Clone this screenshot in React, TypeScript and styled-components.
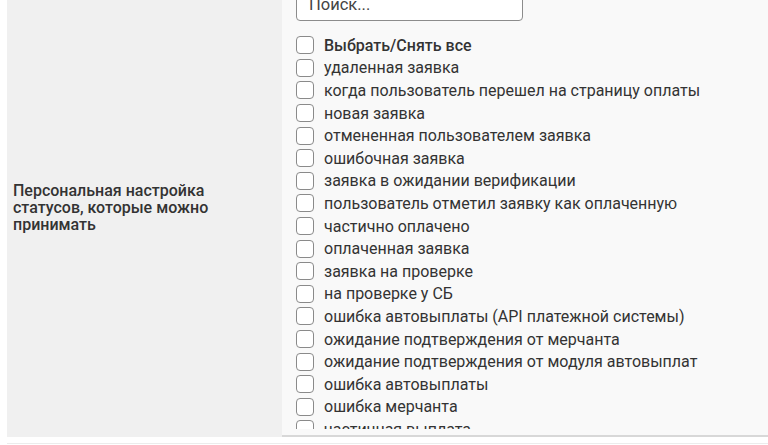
import React from "react";
import styled, { createGlobalStyle } from "styled-components";

const GlobalStyle = createGlobalStyle`
  html, body {
    margin: 0;
    padding: 0;
    background: #ffffff;
    overflow: hidden;
  }
  body {
    font-family: Roboto, "Liberation Sans", Arial, sans-serif;
    color: #333333;
  }
`;

const Page = styled.div`
  padding-left: 7px;
  margin-top: -23px;
`;

const SettingsTable = styled.div`
  display: grid;
  grid-template-columns: 275px 1fr;
  row-gap: 6px;
`;

const LabelCell = styled.div`
  background: #f0f0f0;
  display: flex;
  align-items: center;
  padding: 0 6px;
`;

const Label = styled.div`
  font-size: 16px;
  font-weight: 500;
  line-height: 17px;
  color: #333333;
  max-width: 240px;
`;

const ValueCell = styled.div`
  background: #f9f9f9;
  padding: 10px 14px 6px;
  border-bottom: 2px solid #d8d8d8;
`;

const SearchInput = styled.input`
  display: block;
  box-sizing: border-box;
  width: 227px;
  height: 34px;
  padding: 0 12px;
  margin-bottom: 13px;
  border: 1px solid #8c8c8c;
  border-radius: 4px;
  background: #ffffff;
  font-family: Roboto, "Liberation Sans", Arial, sans-serif;
  font-size: 16.5px;
  outline: none;

  &::placeholder {
    color: #444444;
  }
`;

const StatusList = styled.div`
  height: 395px;
  overflow: hidden;
`;

const StatusRow = styled.label<{ $bold?: boolean }>`
  display: flex;
  align-items: center;
  height: 22.6px;
  font-size: 16px;
  font-weight: ${(p) => (p.$bold ? 500 : 400)};
  color: #333333;
  white-space: nowrap;
`;

const Box = styled.span`
  flex: none;
  box-sizing: border-box;
  width: 18px;
  height: 18px;
  margin-right: 10px;
  border: 1px solid #8a8a8a;
  border-radius: 4px;
  background: #ffffff;
`;

const NextRow = styled.div`
  grid-column: 1 / -1;
  height: 20px;
  border-top: 1px solid #ececec;
`;

const statuses = [
  "удаленная заявка",
  "когда пользователь перешел на страницу оплаты",
  "новая заявка",
  "отмененная пользователем заявка",
  "ошибочная заявка",
  "заявка в ожидании верификации",
  "пользователь отметил заявку как оплаченную",
  "частично оплачено",
  "оплаченная заявка",
  "заявка на проверке",
  "на проверке у СБ",
  "ошибка автовыплаты (API платежной системы)",
  "ожидание подтверждения от мерчанта",
  "ожидание подтверждения от модуля автовыплат",
  "ошибка автовыплаты",
  "ошибка мерчанта",
  "частичная выплата",
];

const App = () => {
  return (
    <>
      <GlobalStyle />
      <Page>
        <SettingsTable>
          <LabelCell>
            <Label>
              Персональная настройка статусов, которые можно принимать
            </Label>
          </LabelCell>
          <ValueCell>
            <SearchInput placeholder="Поиск..." />
            <StatusList>
              <StatusRow $bold>
                <Box />
                Выбрать/Снять все
              </StatusRow>
              {statuses.map((status) => (
                <StatusRow key={status}>
                  <Box />
                  {status}
                </StatusRow>
              ))}
            </StatusList>
          </ValueCell>
          <NextRow />
        </SettingsTable>
      </Page>
    </>
  );
};

export default App;
